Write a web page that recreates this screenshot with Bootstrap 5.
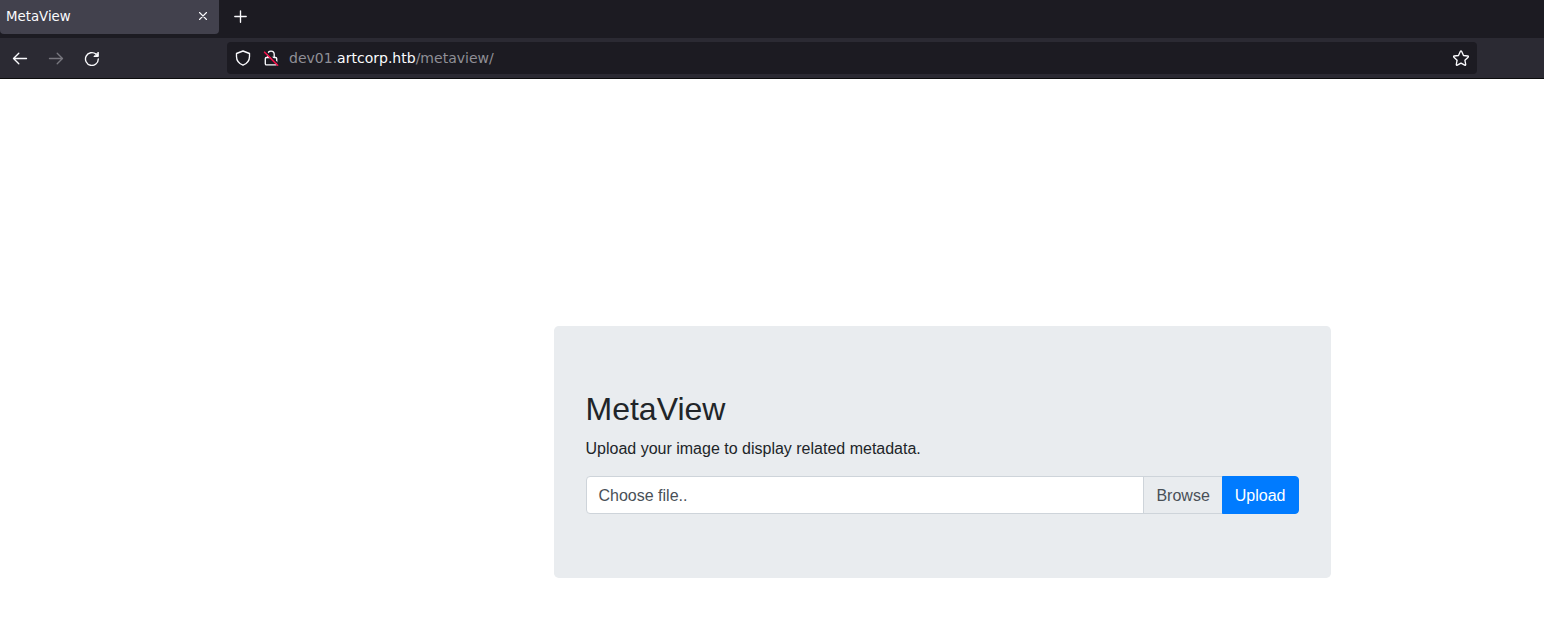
<!DOCTYPE html>
<html lang="en">
<head>
<meta charset="utf-8">
<meta name="viewport" content="width=device-width, initial-scale=1">
<title>MetaView</title>
<link href="https://cdn.jsdelivr.net/npm/bootstrap@5.3.0/dist/css/bootstrap.min.css" rel="stylesheet">
<style>
  body { font-family: "Liberation Sans", Arial, sans-serif; height: 640px; overflow: hidden; background: #fff; color: #212529; }
  .browser { font-family: "DejaVu Sans", sans-serif; }
  .browser svg { display: block; flex: none; fill: none; stroke: #fbfbfe; stroke-width: 1.35; stroke-linecap: round; stroke-linejoin: round; }
  .tabstrip { height: 38px; background: #1c1b22; }
  .page-tab { width: 219px; height: 34px; padding: 0 8px 2px 6px; background: #42414d; color: #fbfbfe; font-size: 13.33px; border-radius: 0 0 4px 4px; }
  .page-tab span { padding-top: 2px; }
  .page-tab .tab-close { stroke-width: 1.1; }
  .new-tab { margin: 8px 0 0 13px; }
  .toolbar { height: 41px; padding: 4px 67px 0 12px; background: #2b2a33; border-bottom: 1px solid #0c0c0d; }
  .nav-icons { width: 215px; height: 32px; gap: 20px; }
  .browser .disabled-icon { stroke: #77767e; }
  .address { height: 32px; padding: 0 8px; background: #1c1b22; border-radius: 4px; font-size: 14.02px; color: #8f8f96; }
  .address span { padding-top: 2px; }
  .address strong { color: #fbfbfe; font-weight: 400; }
  .insecure { margin: 0 6px 0 8px; }
  .upload-panel { width: 777px; margin: 247px 0 0 553.5px; padding: 64px 32px; background: #e9ecef; border-radius: 4.8px; }
  .lead-in { padding-top: 1px; margin-bottom: 15px; }
  .file-label { height: 38px; border: 1px solid #ced4da; border-radius: 4px 0 0 4px; color: #495057; background: #fff; }
  .file-name { padding: 7px 12px 5px; }
  .file-browse { padding: 7px 12px 5px; border-left: 1px solid #ced4da; background: #e9ecef; }
  .upload-btn { height: 38px; margin-left: -1px; padding: 7px 12px 5px; background: #007bff; border: 1px solid #007bff; border-radius: 0 4px 4px 0; color: #fff; line-height: 24px; }
</style>
</head>
<body>
<header class="browser">
  <div class="tabstrip d-flex align-items-start">
    <div class="page-tab d-flex align-items-center justify-content-between">
      <span>MetaView</span>
      <svg class="tab-close" width="16" height="16" viewBox="0 0 16 16"><path d="M4.500 4.500l7 7M11.500 4.500l-7 7"/></svg>
    </div>
    <svg class="new-tab" width="16" height="16" viewBox="0 0 16 16"><path d="M8.500 2.800v11.400M2.800 8.500h11.400"/></svg>
  </div>
  <div class="toolbar d-flex">
    <div class="nav-icons d-flex align-items-center">
      <svg width="16" height="16" viewBox="0 0 16 16"><path d="M14.500 8.500h-13M6.800 3.200L1.500 8.500l5.300 5.300"/></svg>
      <svg class="disabled-icon" width="16" height="16" viewBox="0 0 16 16"><path d="M1.500 8.500h13M9.200 3.200l5.300 5.300-5.300 5.300"/></svg>
      <svg width="16" height="16" viewBox="0 0 16 16"><path d="M14.300 9A6.400 6.400 0 1 1 12 4.100"/><path d="M14.300 2.500v4h-4z" fill="#fbfbfe" stroke-width="1"/></svg>
    </div>
    <div class="address d-flex align-items-center flex-grow-1">
      <svg width="16" height="16" viewBox="0 0 16 16"><path d="M8 1l6.500 2.500v3c0 3.700-2.200 7-6.500 8.700C3.700 13.500 1.500 10.200 1.500 6.500v-3z"/></svg>
      <svg class="insecure" width="24" height="16" viewBox="-4 0 24 16"><path d="M4.800 7.500V4.300a3.200 3.200 0 0 1 6.400 0V7.500M3.500 7.500h9a1.200 1.200 0 0 1 1.200 1.200v5a1.200 1.200 0 0 1-1.200 1.200h-9a1.200 1.200 0 0 1-1.200-1.200v-5a1.200 1.200 0 0 1 1.200-1.200z"/><path d="M2.600 1.400l12.500 12.500" stroke="#1c1b22" stroke-width="1.500"/><path d="M1.600 2.200l13 13" stroke="#f5114b" stroke-width="1.600"/></svg>
      <span class="flex-grow-1">dev01.<strong>artcorp.htb</strong>/metaview/</span>
      <svg width="16" height="16" viewBox="0 0 16 16"><path d="M7.300 1.500q.7-1.200 1.400 0l1.800 4 4.300.5q1.100.3.300 1.200l-3.200 3 .8 4.300q0 1.200-1 .7L8 13.100l-3.700 2.100q-1 .5-1-.7l.8-4.300-3.200-3q-.8-.9.300-1.200l4.300-.5z"/></svg>
    </div>
  </div>
</header>
<main class="upload-panel">
  <h2 class="mb-2">MetaView</h2>
  <p class="lead-in">Upload your image to display related metadata.</p>
  <form class="d-flex">
    <label class="file-label d-flex flex-grow-1">
      <span class="file-name flex-grow-1">Choose file..</span>
      <span class="file-browse">Browse</span>
    </label>
    <button class="upload-btn" type="button">Upload</button>
  </form>
</main>
<script src="https://cdn.jsdelivr.net/npm/bootstrap@5.3.0/dist/js/bootstrap.bundle.min.js"></script>
</body>
</html>
